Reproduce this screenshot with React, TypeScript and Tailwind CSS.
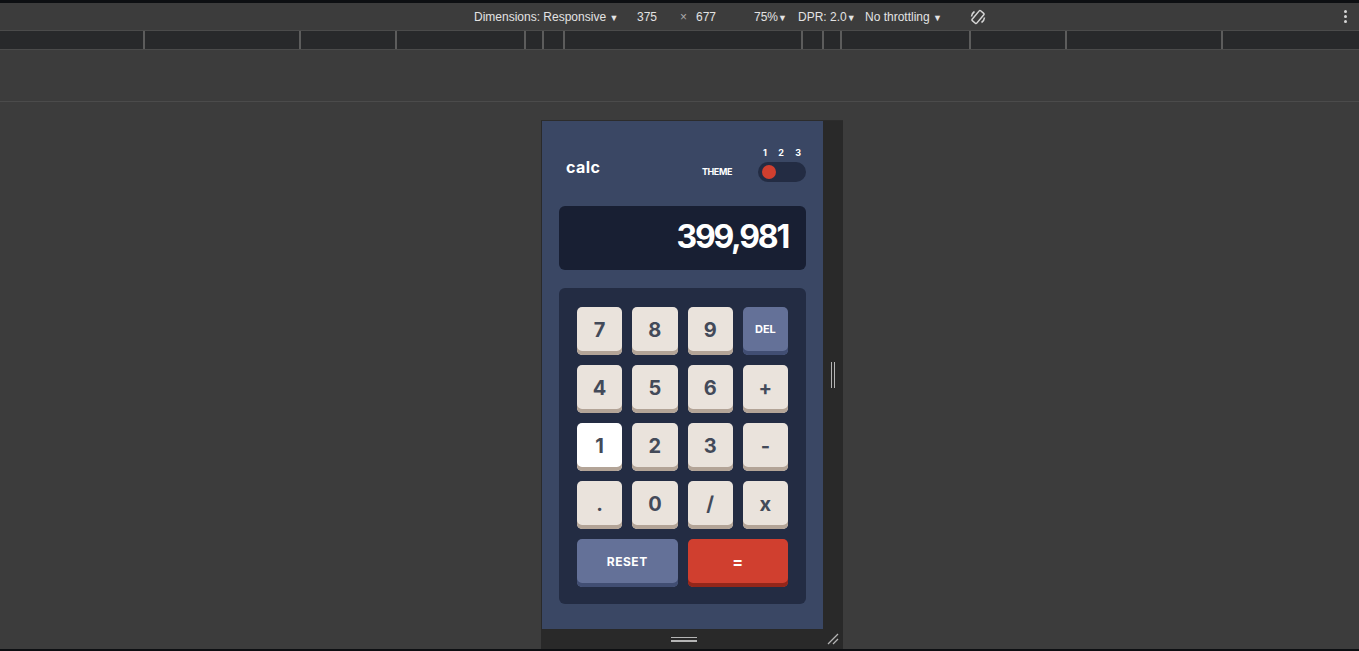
import React from 'react';

const keys: { label: string; kind: 'num' | 'del' | 'reset' | 'eq'; hover?: boolean }[] = [
  { label: '7', kind: 'num' },
  { label: '8', kind: 'num' },
  { label: '9', kind: 'num' },
  { label: 'DEL', kind: 'del' },
  { label: '4', kind: 'num' },
  { label: '5', kind: 'num' },
  { label: '6', kind: 'num' },
  { label: '+', kind: 'num' },
  { label: '1', kind: 'num', hover: true },
  { label: '2', kind: 'num' },
  { label: '3', kind: 'num' },
  { label: '-', kind: 'num' },
  { label: '.', kind: 'num' },
  { label: '0', kind: 'num' },
  { label: '/', kind: 'num' },
  { label: 'x', kind: 'num' },
];

const Key = ({ label, kind, hover }: { label: string; kind: string; hover?: boolean }) => {
  if (kind === 'del') {
    return (
      <button className="h-[48px] rounded-[5px] bg-[#647198] shadow-[inset_0_-4px_0_#414e73] pb-[3px] text-[11px] font-bold text-white">
        {label}
      </button>
    );
  }
  if (kind === 'reset') {
    return (
      <button className="col-span-2 h-[48px] rounded-[5px] bg-[#647198] shadow-[inset_0_-4px_0_#414e73] pb-[3px] text-[12px] font-bold tracking-[0.5px] text-white">
        {label}
      </button>
    );
  }
  if (kind === 'eq') {
    return (
      <button className="col-span-2 h-[48px] rounded-[5px] bg-[#d03f2f] shadow-[inset_0_-4px_0_#93261a] pb-[3px] text-[16px] font-bold text-white">
        {label}
      </button>
    );
  }
  return (
    <button
      className={`h-[48px] rounded-[5px] shadow-[inset_0_-4px_0_#b3a497] pb-[3px] text-[20px] font-bold text-[#434a59] ${
        hover ? 'bg-white' : 'bg-[#eae3dc]'
      }`}
    >
      {label}
    </button>
  );
};

const RotateIcon = () => (
  <svg width="18" height="18" viewBox="0 0 18 18" fill="none" stroke="#d6d6d6" strokeWidth="1.5">
    <rect x="6" y="2.5" width="6" height="13" rx="1" transform="rotate(40 9 9)" />
    <path d="M2.5 8.5a6.5 6.5 0 0 1 3-5" />
    <path d="M15.5 9.5a6.5 6.5 0 0 1-3 5" />
  </svg>
);

const ticks = [145, 156, 96, 129, 18, 21, 238, 21, 18, 129, 96, 156];

export default function App() {
  return (
    <div className="w-[1359px] h-[651px] overflow-hidden bg-[#3c3c3c] flex flex-col font-['Liberation_Sans',sans-serif]">
      <div className="h-[3px] shrink-0 bg-[#0d0f12]" />

      {/* devtools toolbar */}
      <div className="h-[27px] shrink-0 flex items-center pl-[474px] pr-[12px] text-[12px] text-[#e3e3e3]">
        <span className="w-[163px]">Dimensions: Responsive <span className="text-[9px]">▼</span></span>
        <span className="w-[43px]">375</span>
        <span className="w-[16px] text-[#aaa]">×</span>
        <span className="w-[58px]">677</span>
        <span className="w-[44px]">75%<span className="text-[9px]">▼</span></span>
        <span className="w-[67px]">DPR: 2.0<span className="text-[9px]">▼</span></span>
        <span className="w-[104px]">No throttling <span className="text-[9px]">▼</span></span>
        <RotateIcon />
        <div className="ml-auto flex flex-col gap-[2px]">
          <span className="w-[3px] h-[3px] rounded-full bg-[#d6d6d6]" />
          <span className="w-[3px] h-[3px] rounded-full bg-[#d6d6d6]" />
          <span className="w-[3px] h-[3px] rounded-full bg-[#d6d6d6]" />
        </div>
      </div>

      {/* ruler */}
      <div className="h-[20px] shrink-0 border-y border-[#4b4b4b] bg-[#28292b] flex">
        {ticks.map((w, i) => (
          <div key={i} className="h-full flex shrink-0" style={{ width: w }}>
            <div className="ml-auto w-[2px] h-full bg-[#5c5c5c]" />
          </div>
        ))}
      </div>

      <div className="h-[52px] shrink-0 border-b border-[#4b4b4b]" />

      {/* viewport */}
      <div className="flex flex-col pl-[541px] pt-[18px]">
        <div className="flex border-t border-[#2c2c2c] w-[302px]">
          <div className="w-[282px] h-[508px] border-l border-[#2a2a2a] bg-[#3a4764] px-[17px] pt-[27px] font-['Inter',sans-serif] text-white">
            <div className="flex items-center justify-between">
              <span className="pl-[7px] mt-[3px] text-[16px] font-bold leading-none tracking-[0.4px]">calc</span>
              <div className="flex items-end gap-[26px]">
                <span className="mb-[5px] text-[9px] font-bold leading-[10px] tracking-[-0.4px]">THEME</span>
                <div className="flex flex-col">
                  <div className="flex justify-between px-[5px] text-[9px] font-bold leading-[10px]">
                    <span>1</span>
                    <span>2</span>
                    <span>3</span>
                  </div>
                  <div className="mt-[4px] w-[48px] h-[20px] rounded-full bg-[#232c43] flex items-center pl-[4px]">
                    <span className="w-[14px] h-[14px] rounded-full bg-[#d03f2f]" />
                  </div>
                </div>
              </div>
            </div>

            <div className="mt-[24px] h-[64px] rounded-[6px] bg-[#181f33] flex items-center justify-end pr-[18px] pb-[3px]">
              <span className="text-[32px] font-bold leading-none tracking-[-2.2px]">399,981</span>
            </div>

            <div className="mt-[18px] h-[316px] rounded-[6px] bg-[#232c43] pt-[19px] pl-[18px] pr-[18px] grid grid-cols-4 gap-x-[10px] gap-y-[10px] content-start">
              {keys.map((k) => (
                <Key key={k.label} label={k.label} kind={k.kind} hover={k.hover} />
              ))}
              <Key label="RESET" kind="reset" />
              <Key label="=" kind="eq" />
            </div>
          </div>

          {/* scrollbar gutter */}
          <div className="w-[20px] h-[508px] bg-[#292929] flex items-center justify-center">
            <div className="flex gap-[2px]">
              <span className="w-[1px] h-[26px] bg-[#b5b5b5]" />
              <span className="w-[1px] h-[26px] bg-[#b5b5b5]" />
            </div>
          </div>
        </div>

        {/* bottom resize strip */}
        <div className="w-[302px] h-[20px] bg-[#292929] flex items-center">
          <div className="ml-[130px] flex flex-col gap-[2px]">
            <span className="w-[26px] h-[1.5px] bg-[#b5b5b5]" />
            <span className="w-[26px] h-[1.5px] bg-[#b5b5b5]" />
          </div>
          <svg className="ml-auto mr-[4px]" width="12" height="12" viewBox="0 0 12 12" stroke="#b5b5b5" strokeWidth="1.3">
            <path d="M1 11L11 1" />
            <path d="M6 11L11 6" />
          </svg>
        </div>
      </div>
      <div className="flex-1 bg-[#0d0f12]" />
    </div>
  );
}
